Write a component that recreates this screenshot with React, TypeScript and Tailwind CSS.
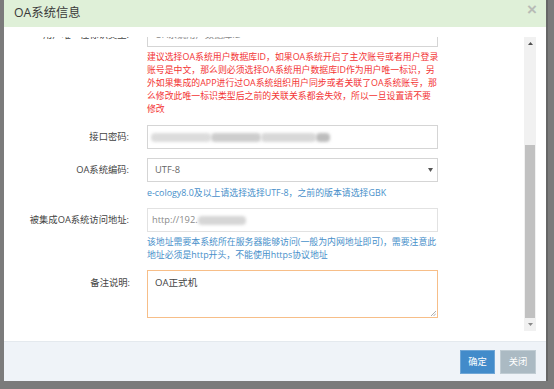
import React from 'react';

const font = "font-['Open_Sans','Noto_Sans_CJK_SC',sans-serif]";

function FieldRow({ label, children, h = 'h-[24px]' }: { label: string; children: React.ReactNode; h?: string }) {
  return (
    <div className={`flex items-center ${h}`}>
      <div className="w-[116px] shrink-0 text-right text-[9.3px] text-[#444] pr-[1px] whitespace-nowrap">{label}</div>
      <div className="ml-[17px] w-[291px] h-full">{children}</div>
    </div>
  );
}

function Help({ children, tone }: { children: React.ReactNode; tone: 'red' | 'blue' }) {
  return (
    <div className="flex">
      <div className="w-[116px] shrink-0" />
      <div
        className={`ml-[17px] w-[300px] whitespace-nowrap text-[8.9px] leading-[13px] ${
          tone === 'red' ? 'text-[#f33434]' : 'text-[#478fca]'
        }`}
      >
        {children}
      </div>
    </div>
  );
}

function Blur({ w, shade = 'bg-[#cfcfcf]' }: { w: string; shade?: string }) {
  return <span className={`inline-block h-[9px] ${w} ${shade} blur-[1.5px] rounded-sm`} />;
}

export default function App() {
  return (
    <div className={`w-[554px] h-[389px] bg-[#7b7b7b] pl-[4px] pr-[6px] pb-[8px] overflow-hidden ${font}`}>
      <div className="w-[544px] h-[381px] flex flex-col bg-white border-r-2 border-[#666]">
        {/* Header */}
        <div className="h-[27px] shrink-0 bg-[#dff0d8] flex items-center justify-between pl-[10px] pr-[9px]">
          <span className="text-[12.3px] text-[#393939]">OA系统信息</span>
          <span className="font-['Liberation_Sans',sans-serif] font-bold text-[17px] leading-none text-[#b8bcb6] -mt-[8px]">×</span>
        </div>

        {/* Body */}
        <div className="h-[314px] shrink-0 min-h-0 flex px-[10px] py-[10px]">
          <div className="flex-1 min-h-0 overflow-hidden">
            <div className="-mt-[14px] flex flex-col">
              <FieldRow label="用户唯一性标识类型:">
                <div className="h-full border border-[#d5d5d5] px-[7px] flex items-center text-[9.2px] text-[#888]">
                  OA系统用户数据库ID
                </div>
              </FieldRow>

              <div className="mt-[3px]">
                <Help tone="red">
                  建议选择OA系统用户数据库ID，如果OA系统开启了主次账号或者用户登录
                  <br />
                  账号是中文，那么则必须选择OA系统用户数据库ID作为用户唯一标识，另
                  <br />
                  外如果集成的APP进行过OA系统组织用户同步或者关联了OA系统账号，那
                  <br />
                  么修改此唯一标识类型后之前的关联关系都会失效，所以一旦设置请不要
                  <br />
                  修改
                </Help>
              </div>

              <div className="mt-[10px]">
                <FieldRow label="接口密码:">
                  <div className="h-full border border-[#d5d5d5] pl-[3px] flex items-center gap-0">
                    <Blur w="w-[60px]" shade="bg-[#dcdcdc]" />
                    <Blur w="w-[50px]" shade="bg-[#cdcdcd]" />
                    <Blur w="w-[55px]" shade="bg-[#d8d8d8]" />
                    <Blur w="w-[14px]" shade="bg-[#bdbdbd]" />
                  </div>
                </FieldRow>
              </div>

              <div className="mt-[9px]">
                <FieldRow label="OA系统编码:">
                  <div className="h-full border border-[#d5d5d5] pl-[7px] pr-[4px] flex items-center justify-between text-[9.3px] text-[#666]">
                    <span>UTF-8</span>
                    <svg width="5" height="4" viewBox="0 0 5 4">
                      <path d="M0 0 L5 0 L2.5 4 Z" fill="#555" />
                    </svg>
                  </div>
                </FieldRow>
              </div>

              <div className="mt-[4px]">
                <Help tone="blue">e-cology8.0及以上请选择选择UTF-8，之前的版本请选择GBK</Help>
              </div>

              <div className="mt-[9px]">
                <FieldRow label="被集成OA系统访问地址:">
                  <div className="h-full border border-[#e2e2e2] px-[4px] flex items-center text-[9.3px] text-[#8a8a8a]">
                    <span>http://192.</span>
                    <Blur w="w-[48px]" shade="bg-[#d6d6d6]" />
                  </div>
                </FieldRow>
              </div>

              <div className="mt-[3px]">
                <Help tone="blue">
                  该地址需要本系统所在服务器能够访问(一般为内网地址即可)，需要注意此
                  <br />
                  地址必须是http开头，不能使用https协议地址
                </Help>
              </div>

              <div className="mt-[9px] flex">
                <div className="w-[116px] shrink-0 text-right text-[9.3px] text-[#444] pt-[6px]">备注说明:</div>
                <div className="ml-[17px] w-[291px] h-[48px] border border-[#f7be88] px-[7px] pt-[5px] text-[9.6px] text-[#444] relative">
                  OA正式机
                  <svg className="absolute right-[1px] bottom-[1px]" width="6" height="6" viewBox="0 0 6 6">
                    <path d="M6 1 L1 6 M6 3.5 L3.5 6" stroke="#999" strokeWidth="0.8" />
                  </svg>
                </div>
              </div>
            </div>
          </div>

          {/* Scrollbar */}
          <div className="w-[12px] shrink-0 bg-[#f1f1f1] flex flex-col">
            <div className="h-[12px] flex items-center justify-center">
              <svg width="5" height="3" viewBox="0 0 5 3">
                <path d="M0 3 L5 3 L2.5 0 Z" fill="#505050" />
              </svg>
            </div>
            <div className="h-[96px]" />
            <div className="flex-1 bg-[#c1c1c1] mx-[1px]" />
            <div className="h-[13px] flex items-center justify-center">
              <svg width="5" height="3" viewBox="0 0 5 3">
                <path d="M0 0 L5 0 L2.5 3 Z" fill="#8a8a8a" />
              </svg>
            </div>
          </div>
        </div>

        {/* Footer */}
        <div className="h-[40px] shrink-0 bg-[#eff3f8] border-t border-[#e4e9ee] flex items-center justify-end gap-[5px] pr-[10px]">
          <button className="w-[35px] h-[24px] bg-[#428bca] border border-[#6fa6d6] text-white text-[9.3px]">确定</button>
          <button className="w-[36px] h-[24px] bg-[#abbac3] border border-[#c0ccd3] text-white text-[9.3px]">关闭</button>
        </div>
      </div>
    </div>
  );
}
